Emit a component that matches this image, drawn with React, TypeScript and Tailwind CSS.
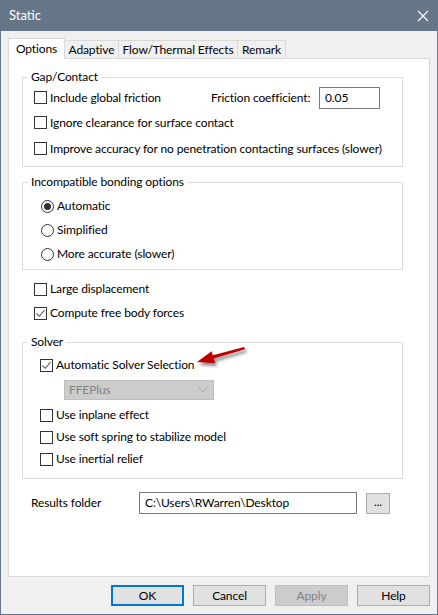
import React from "react";

const font = { fontFamily: 'Lato, "Noto Sans", sans-serif' };

function Check({ checked }: { checked?: boolean }) {
  return (
    <span className="flex h-[13px] w-[13px] shrink-0 items-center justify-center border border-[#333333] bg-white">
      {checked && (
        <svg width="11" height="11" viewBox="0 0 11 11">
          <path d="M1.5 5.5 L4.3 8.3 L9.5 2.2" fill="none" stroke="#5a5a5a" strokeWidth="1.1" />
        </svg>
      )}
    </span>
  );
}

function Radio({ checked }: { checked?: boolean }) {
  return (
    <span className="flex h-[13px] w-[13px] shrink-0 items-center justify-center rounded-full border border-[#333333] bg-white">
      {checked && <span className="h-[7px] w-[7px] rounded-full bg-[#333333]" />}
    </span>
  );
}

function CheckRow({ label, checked, h }: { label: string; checked?: boolean; h: string }) {
  return (
    <div className={`flex items-center gap-[3px] whitespace-nowrap ${h}`}>
      <Check checked={checked} />
      <span>{label}</span>
    </div>
  );
}

function Group({ title, className, inner, children }: { title: string; className?: string; inner?: string; children: React.ReactNode }) {
  return (
    <fieldset className={`ml-[13px] w-[381px] border border-[#dcdcdc] ${className ?? ""}`}>
      <legend className="ml-[5px] h-[16px] px-[3px] leading-[16px]">{title}</legend>
      <div className={inner}>{children}</div>
    </fieldset>
  );
}

const tabs = ["Options", "Adaptive", "Flow/Thermal Effects", "Remark"];

function Btn({ label, kind }: { label: string; kind?: "default" | "disabled" }) {
  const cls =
    kind === "default"
      ? "border-2 border-[#0078d7] bg-[#e1e1e1] text-black"
      : kind === "disabled"
        ? "border border-[#bfbfbf] bg-[#cccccc] text-[#838383]"
        : "border border-[#adadad] bg-[#e1e1e1] text-black";
  return (
    <div className={`flex h-[21px] w-[73px] items-center justify-center ${cls}`}>{label}</div>
  );
}

export default function App() {
  return (
    <div
      className="relative flex h-[615px] w-[438px] flex-col border-x border-b border-[#677589] bg-[#f0f0f0] text-[12px] tracking-[-0.12px] text-black"
      style={font}
    >
      {/* title bar */}
      <div className="-mx-px flex h-[31px] shrink-0 items-center justify-between bg-[#677589] pl-[9px] pr-[9px] text-[13px] tracking-normal text-white">
        <span>Static</span>
        <svg width="12" height="12" viewBox="0 0 12 12">
          <path d="M1 1 L11 11 M11 1 L1 11" stroke="white" strokeWidth="1.2" />
        </svg>
      </div>

      <div className="flex flex-1 flex-col px-[7px] pt-[7px]">
        {/* tabs */}
        <div className="flex h-[20px] items-end">
          {tabs.map((t, i) =>
            i === 0 ? (
              <div
                key={t}
                className="relative z-10 -mb-px flex h-[21px] w-[57px] items-center justify-center border border-b-0 border-[#d9d9d9] bg-white pb-[1px]"
              >
                {t}
              </div>
            ) : (
              <div
                key={t}
                className={`-ml-px flex h-[18px] items-center justify-center whitespace-nowrap border border-b-0 border-[#d9d9d9] bg-[#f0f0f0] pt-[1px] ${
                  i === 1 ? "w-[55px]" : i === 2 ? "w-[120px]" : "w-[49px]"
                }`}
              >
                {t}
              </div>
            ),
          )}
        </div>

        {/* panel */}
        <div className="flex h-[519px] flex-col border border-[#d9d9d9] bg-white">
          <Group title="Gap/Contact" className="mt-[10px]" inner="pb-[4px] pl-[11px]">
            <div className="flex h-[25px] items-center whitespace-nowrap">
              <div className="flex w-[177px] items-center gap-[3px]">
                <Check />
                <span>Include global friction</span>
              </div>
              <span className="w-[108px]">Friction coefficient:</span>
              <div className="flex h-[22px] w-[61px] items-start border border-[#7a7a7a] px-[5px] pt-[1px]">0.05</div>
            </div>
            <CheckRow label="Ignore clearance for surface contact" h="h-[25px]" />
            <CheckRow label="Improve accuracy for no penetration contacting surfaces (slower)" h="h-[27px]" />
          </Group>

          <Group title="Incompatible bonding options" className="mt-[7px]" inner="pb-[3px] pl-[18px] pt-[4px]">
            {["Automatic", "Simplified", "More accurate (slower)"].map((r, i) => (
              <div key={r} className="flex h-[24px] items-center gap-[3px]">
                <Radio checked={i === 0} />
                <span>{r}</span>
              </div>
            ))}
          </Group>

          <div className="mt-[7px] pl-[25px]">
            <CheckRow label="Large displacement" h="h-[24px]" />
            <CheckRow label="Compute free body forces" checked h="h-[24px]" />
          </div>

          <Group title="Solver" className="mt-[9px]" inner="pb-[8px] pl-[17px] pt-[3px]">
            <CheckRow label="Automatic Solver Selection" checked h="h-[24px]" />
            <div className="ml-[24px] mt-[3px] flex h-[20px] w-[150px] items-center justify-between border border-[#bfbfbf] bg-[#cccccc] pl-[4px] pr-[5px] text-[#838383]">
              <span>FFEPlus</span>
              <svg width="10" height="6" viewBox="0 0 10 6">
                <path d="M0.5 0.5 L5 5 L9.5 0.5" fill="none" stroke="#a8a8a8" strokeWidth="1" />
              </svg>
            </div>
            <div className="mt-[4px]">
              <CheckRow label="Use inplane effect" h="h-[22px]" />
              <CheckRow label="Use soft spring to stabilize model" h="h-[22px]" />
              <CheckRow label="Use inertial relief" h="h-[22px]" />
            </div>
          </Group>

          <div className="mt-[13px] flex h-[22px] items-center pl-[22px]">
            <span className="w-[108px]">Results folder</span>
            <div className="flex h-[22px] w-[218px] items-center border border-[#7a7a7a] px-[5px]">
              C:\Users\RWarren\Desktop
            </div>
            <div className="ml-[9px] flex h-[21px] w-[24px] items-center justify-center border border-[#adadad] bg-[#e1e1e1] pb-[3px]">
              ...
            </div>
          </div>
        </div>

        {/* buttons */}
        <div className="mt-[8px] flex justify-end gap-[9px]">
          <Btn label="OK" kind="default" />
          <Btn label="Cancel" />
          <Btn label="Apply" kind="disabled" />
          <Btn label="Help" />
        </div>
      </div>

      {/* annotation arrow */}
      <svg className="pointer-events-none absolute left-[190px] top-[340px]" width="64" height="36" viewBox="0 0 64 36">
        <defs>
          <filter id="sh" x="-20%" y="-40%" width="160%" height="200%">
            <feDropShadow dx="2" dy="3" stdDeviation="1.6" floodColor="#000" floodOpacity="0.45" />
          </filter>
        </defs>
        <g filter="url(#sh)">
          <path d="M53 7 L54 9.2 L22 18.8 L21 15.6 Z" fill="#c00000" />
          <path d="M6 22 L20.6 11.2 L24.2 23.2 Z" fill="#c00000" />
        </g>
      </svg>
    </div>
  );
}
